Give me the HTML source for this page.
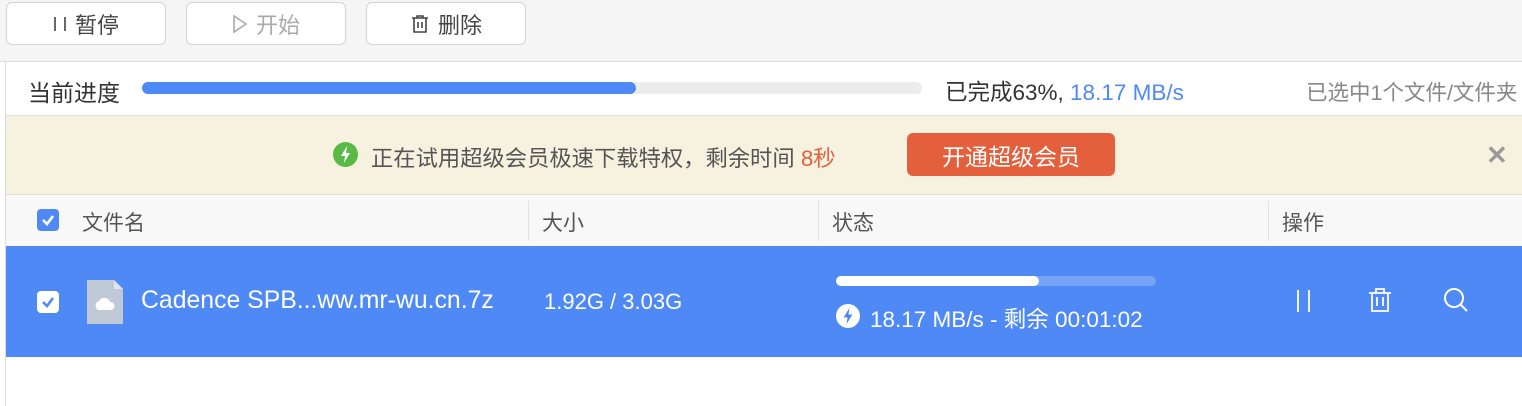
<!DOCTYPE html>
<html><head><meta charset="utf-8"><style>
*{margin:0;padding:0;box-sizing:border-box}
body{width:1522px;height:406px;overflow:hidden;background:#fff;font-family:"Liberation Sans","Noto Sans CJK SC",sans-serif;position:relative;color:#333}
.abs{position:absolute;white-space:nowrap}
.tb{left:0;top:0;width:1522px;height:62px;background:#f5f5f5;border-bottom:1px solid #ddd}
.btn{top:2px;width:160px;height:43px;border:1px solid #d4d4d4;border-radius:6px;background:#fff;font-size:22px;display:flex;align-items:center;justify-content:center;gap:8px;color:#444}
.lv{left:5px;top:62px;width:1px;height:344px;background:#ddd}
.banner{left:6px;top:115px;width:1516px;height:80px;background:#f7f2e0;border-top:1px solid #e3e0d6;border-bottom:1px solid #e3e0d6}
.hdr{left:6px;top:195px;width:1516px;height:51px;background:#f8f8f9;font-size:21px;color:#555}
.row{left:6px;top:246px;width:1516px;height:111px;background:#4e89f5;color:#fff}
.cb{width:22px;height:22px;border-radius:4px;display:flex;align-items:center;justify-content:center}
.div{top:6px;width:1px;height:40px;background:#e2e2e2}
</style></head><body>
<div class="abs tb"></div>
<div class="abs btn" style="left:6px"><svg width="14" height="20"><path d="M2 3V17M12 3V17" stroke="#444" stroke-width="1.6"/></svg>暂停</div>
<div class="abs btn" style="left:186px;color:#aaa"><svg width="16" height="20" viewBox="0 0 16 20"><path d="M2 2 L14 10 L2 18 Z" fill="none" stroke="#aaa" stroke-width="1.6"/></svg>开始</div>
<div class="abs btn" style="left:366px"><svg width="20" height="20" viewBox="0 0 20 20" fill="none" stroke="#444" stroke-width="1.6"><path d="M2 4H18M7 4V2H13V4M4 4V18H16V4M8 8V14M12 8V14"/></svg>删除</div>
<div class="abs lv"></div>
<div class="abs" style="left:28px;top:74px;font-size:23px;color:#333">当前进度</div>
<div class="abs" style="left:142px;top:82px;width:780px;height:12px;border-radius:6px;background:#ececec"><div style="width:494px;height:12px;border-radius:6px;background:#4e89f5"></div></div>
<div class="abs" style="left:945px;top:75px;font-size:22.5px;color:#333">已完成63%, <span style="color:#4e89f5">18.17 MB/s</span></div>
<div class="abs" style="left:1306px;top:76px;font-size:21.5px;color:#888">已选中1个文件/文件夹</div>
<div class="abs banner"></div>
<div class="abs" style="left:333px;top:142px;width:25px;height:25px;border-radius:50%;background:#5ab947"><svg width="25" height="25" viewBox="0 0 25 25"><path d="M14 4 L8 14 H12 L11 21 L17 11 H13 Z" fill="#fff"/></svg></div>
<div class="abs" style="left:371px;top:141px;font-size:22.3px;color:#555">正在试用超级会员极速下载特权，剩余时间 <span style="color:#e4603d">8秒</span></div>
<div class="abs" style="left:907px;top:133px;width:208px;height:43px;border-radius:6px;background:#e4603d;color:#fff;font-size:23px;display:flex;align-items:center;justify-content:center">开通超级会员</div>
<div class="abs" style="left:1486px;top:140px;font-size:26px;color:#999;font-weight:bold">✕</div>
<div class="abs hdr">
<div class="abs cb" style="left:31px;top:14px;background:#4e89f5"><svg width="16" height="16" viewBox="0 0 16 16"><path d="M3 8 L7 12 L13 4" fill="none" stroke="#fff" stroke-width="2.6"/></svg></div>
<div class="abs" style="left:76px;top:12px">文件名</div>
<div class="abs div" style="left:522px"></div>
<div class="abs" style="left:536px;top:12px">大小</div>
<div class="abs div" style="left:812px"></div>
<div class="abs" style="left:826px;top:12px">状态</div>
<div class="abs div" style="left:1262px"></div>
<div class="abs" style="left:1276px;top:12px">操作</div>
</div>
<div class="abs row">
<div class="abs cb" style="left:31px;top:45px;background:#fff"><svg width="16" height="16" viewBox="0 0 16 16"><path d="M3 8 L7 12 L13 4" fill="none" stroke="#4e89f5" stroke-width="2.6"/></svg></div>
<svg class="abs" style="left:80px;top:34px" width="38" height="44" viewBox="0 0 38 44"><path d="M1 0H28L37 9V44H1Z" fill="#c0c9d6"/><path d="M28 0V9H37Z" fill="#e0e5ec"/><path d="M12 30a5 5 0 0 1 1-9a6 6 0 0 1 11 1a4 4 0 0 1 1 8Z" fill="#fff"/></svg>
<div class="abs" style="left:135px;top:41px;font-size:24.8px">Cadence SPB...ww.mr-wu.cn.7z</div>
<div class="abs" style="left:538px;top:43px;font-size:22px">1.92G / 3.03G</div>
<div class="abs" style="left:830px;top:30px;width:320px;height:10px;border-radius:5px;background:#76a2f7"><div style="width:203px;height:10px;border-radius:5px;background:#fff"></div></div>
<div class="abs" style="left:830px;top:58px;width:24px;height:24px;border-radius:50%;background:#fff"><svg width="24" height="24" viewBox="0 0 25 25"><path d="M14 4 L8 14 H12 L11 21 L17 11 H13 Z" fill="#4e89f5"/></svg></div>
<div class="abs" style="left:864px;top:56px;font-size:22.5px">18.17 MB/s - 剩余 00:01:02</div>
<svg class="abs" style="left:1286px;top:42px" width="24" height="26"><path d="M6 2V24M17 2V24" stroke="#fff" stroke-width="1.8"/></svg>
<svg class="abs" style="left:1360px;top:40px" width="28" height="28" viewBox="0 0 28 28" fill="none" stroke="#fff" stroke-width="1.8"><path d="M3 7H25M10 7V3H18V7M6 7V25H22V7M11 11V20M17 11V20"/></svg>
<svg class="abs" style="left:1436px;top:40px" width="28" height="28" viewBox="0 0 28 28" fill="none" stroke="#fff" stroke-width="2"><circle cx="12" cy="12" r="9"/><path d="M18 18L25 25"/></svg>
</div>
</body></html>
